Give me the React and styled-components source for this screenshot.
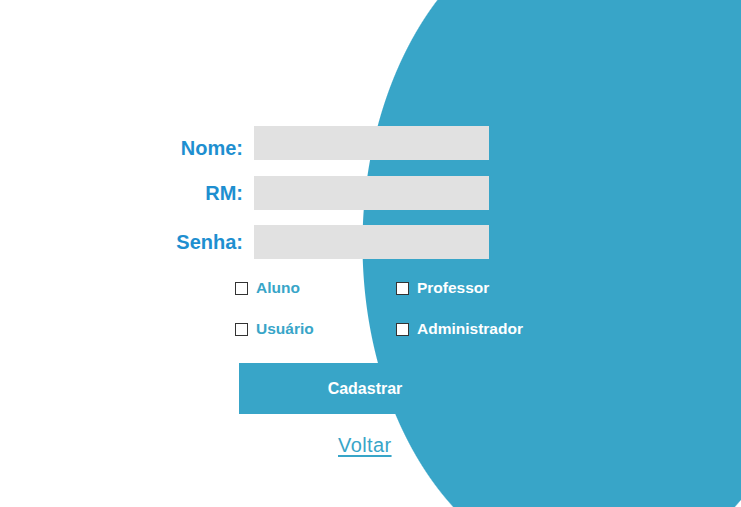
import styled, { createGlobalStyle } from "styled-components";

const GlobalStyle = createGlobalStyle`
  html, body {
    margin: 0;
    padding: 0;
    background: #ffffff;
  }
  * {
    box-sizing: border-box;
  }
`;

export default function App() {
  return (
    <>
      <GlobalStyle />
      <Page>
        <Form onSubmit={(e) => e.preventDefault()}>
          <Fields>
            <Field>
              <Label htmlFor="nome" $shift={5}>Nome:</Label>
              <Input id="nome" type="text" />
            </Field>
            <Field>
              <Label htmlFor="rm" $shift={0}>RM:</Label>
              <Input id="rm" type="text" />
            </Field>
            <Field>
              <Label htmlFor="senha" $shift={0}>Senha:</Label>
              <Input id="senha" type="password" />
            </Field>
          </Fields>

          <Checks>
            <Check>
              <Box type="checkbox" />
              <CheckText>Aluno</CheckText>
            </Check>
            <Check>
              <Box type="checkbox" />
              <CheckText $light>Professor</CheckText>
            </Check>
            <Check>
              <Box type="checkbox" />
              <CheckText>Usuário</CheckText>
            </Check>
            <Check>
              <Box type="checkbox" />
              <CheckText $light>Administrador</CheckText>
            </Check>
          </Checks>

          <Submit type="submit">Cadastrar</Submit>
          <Back href="#">Voltar</Back>
        </Form>
      </Page>
    </>
  );
}

const Page = styled.div`
  width: 100%;
  min-height: 507px;
  padding: 126px 0 0 153px;
  background: radial-gradient(
    232px 332px at 594px 244px,
    #38a5c8 calc(100% - 1px),
    #ffffff 100%
  );
  font-family: "Liberation Sans", Arial, sans-serif;
`;

const Form = styled.form`
  display: flex;
  flex-direction: column;
  width: 380px;
`;

const Fields = styled.div`
  display: flex;
  flex-direction: column;
  gap: 15.5px;
`;

const Field = styled.div`
  display: grid;
  grid-template-columns: 90px 235px;
  grid-template-rows: 34px;
  column-gap: 11px;
`;

const Label = styled.label`
  padding-top: ${(p) => p.$shift}px;
  text-align: right;
  font-size: 20px;
  line-height: 34px;
  font-weight: 700;
  color: #1e8fd0;
`;

const Input = styled.input`
  width: 235px;
  height: 34px;
  border: none;
  outline: none;
  background: #e1e1e1;
  padding: 0 10px;
  font-size: 16px;
`;

const Checks = styled.div`
  display: grid;
  grid-template-columns: 161px auto;
  grid-auto-rows: 20px;
  row-gap: 21px;
  margin: 19px 0 0 82px;
`;

const Check = styled.label`
  display: flex;
  align-items: center;
  gap: 8px;
  cursor: pointer;
`;

const Box = styled.input`
  appearance: none;
  margin: 0;
  width: 13px;
  height: 13px;
  border: 1px solid #333333;
  background: #ffffff;
  cursor: pointer;

  &:checked {
    background: #1e8fd0;
  }
`;

const CheckText = styled.span`
  font-size: 15.5px;
  font-weight: 700;
  color: ${(p) => (p.$light ? "#ffffff" : "#38a5c8")};
`;

const Submit = styled.button`
  margin: 24px 0 0 86px;
  width: 252px;
  height: 51px;
  border: none;
  background: #38a5c8;
  color: #ffffff;
  font-family: inherit;
  font-size: 16px;
  font-weight: 700;
  cursor: pointer;
`;

const Back = styled.a`
  align-self: flex-start;
  margin: 20px 0 0 185px;
  font-size: 20px;
  letter-spacing: 0.4px;
  color: #38a5c8;
  text-decoration: underline;
  text-underline-offset: 3px;
`;
